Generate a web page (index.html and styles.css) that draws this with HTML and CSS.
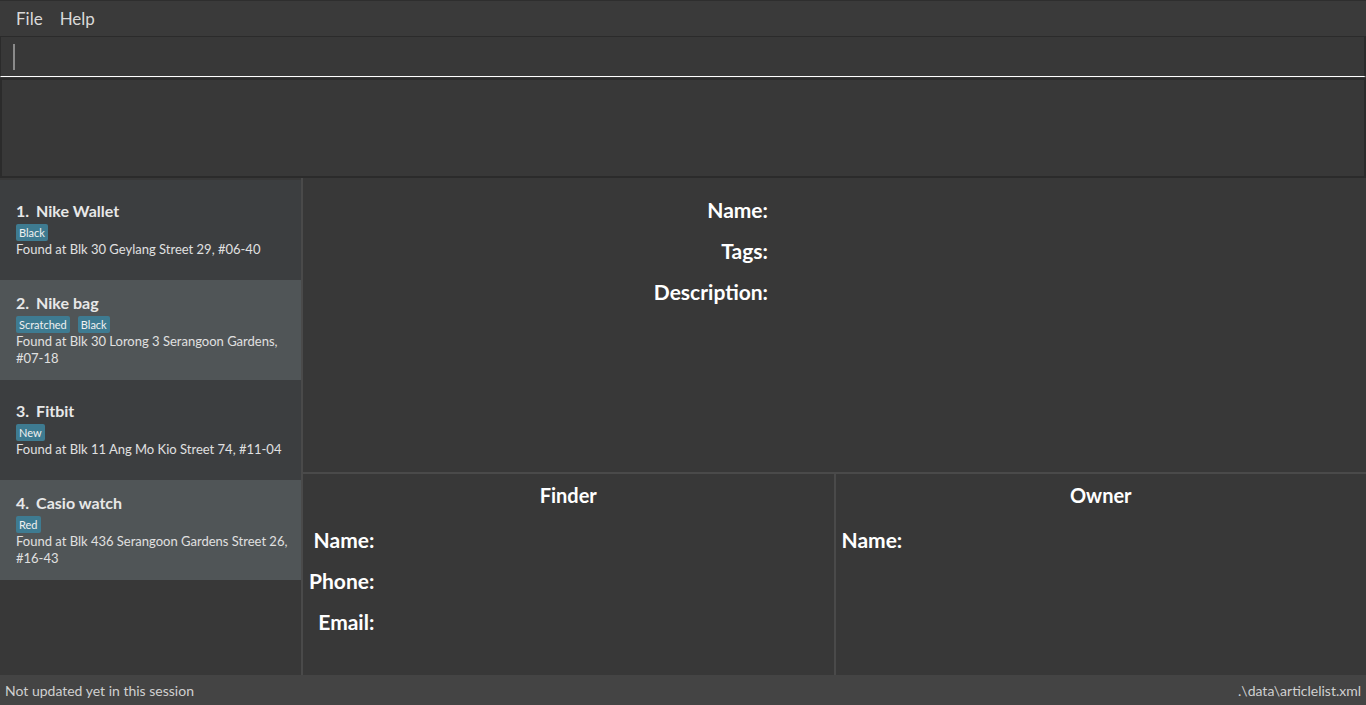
FILE: index.html
```html
<!DOCTYPE html>
<html>
<head>
<meta charset="utf-8">
<link rel="stylesheet" href="styles.css">
</head>
<body>
<div class="app">
  <div class="menubar">
    <span class="menu-item">File</span>
    <span class="menu-item">Help</span>
  </div>
  <div class="command"><span class="caret"></span></div>
  <div class="result"></div>
  <div class="main">
    <div class="list">
      <div class="card dark">
        <div class="title"><span class="idx">1.</span>Nike Wallet</div>
        <div class="tags"><span class="tag">Black</span></div>
        <div class="addr">Found at Blk 30 Geylang Street 29, #06-40</div>
      </div>
      <div class="card light">
        <div class="title"><span class="idx">2.</span>Nike bag</div>
        <div class="tags"><span class="tag">Scratched</span><span class="tag">Black</span></div>
        <div class="addr">Found at Blk 30 Lorong 3 Serangoon Gardens, #07-18</div>
      </div>
      <div class="card dark">
        <div class="title"><span class="idx">3.</span>Fitbit</div>
        <div class="tags"><span class="tag">New</span></div>
        <div class="addr">Found at Blk 11 Ang Mo Kio Street 74, #11-04</div>
      </div>
      <div class="card light">
        <div class="title"><span class="idx">4.</span>Casio watch</div>
        <div class="tags"><span class="tag">Red</span></div>
        <div class="addr">Found at Blk 436 Serangoon Gardens Street 26, #16-43</div>
      </div>
    </div>
    <div class="detail">
      <div class="article">
        <div class="lbl">Name:</div><div></div>
        <div class="lbl">Tags:</div><div></div>
        <div class="lbl">Description:</div><div></div>
      </div>
      <div class="people">
        <div class="person finder">
          <div class="ptitle">Finder</div>
          <div class="pgrid">
            <div class="lbl">Name:</div><div></div>
            <div class="lbl">Phone:</div><div></div>
            <div class="lbl">Email:</div><div></div>
          </div>
        </div>
        <div class="person owner">
          <div class="ptitle">Owner</div>
          <div class="pgrid">
            <div class="lbl">Name:</div><div></div>
          </div>
        </div>
      </div>
    </div>
  </div>
  <div class="status">
    <span>Not updated yet in this session</span>
    <span>.\data\articlelist.xml</span>
  </div>
</div>
</body>
</html>
```
FILE: styles.css
```css
* { box-sizing: border-box; }
html, body { margin: 0; padding: 0; }
body {
  background: #383838;
  font-family: "Lato", "Open Sans", sans-serif;
  color: #e6e6e6;
  width: 1366px;
  height: 705px;
  overflow: hidden;
}
.app {
  display: flex;
  flex-direction: column;
  height: 705px;
}
.menubar {
  height: 37px;
  background: #3a3a3a;
  border-top: 1px solid #2e2e2e;
  border-bottom: 1px solid #2b2b2b;
  display: flex;
  align-items: center;
  gap: 17px;
  padding-left: 16px;
  font-size: 17px;
  color: #d9d9d9;
}
.command {
  height: 40px;
  background: #383838;
  border-left: 1px solid #2b2b2b;
  border-right: 2px solid #2b2b2b;
  border-bottom: 1px solid #ffffff;
  display: flex;
  align-items: center;
  padding-left: 12px;
}
.caret {
  width: 2px;
  height: 26px;
  background: #8a8a8a;
}
.result {
  height: 100px;
  margin-top: 1px;
  background: #383838;
  border: 2px solid #2b2b2b;
}
.main {
  flex: 1;
  display: flex;
  min-height: 0;
}
.list {
  width: 303px;
  border-right: 2px solid #4a4a4a;
  padding-top: 2px;
  background: #383838;
}
.card {
  height: 100px;
  display: flex;
  flex-direction: column;
  justify-content: center;
  padding: 0 6px 0 16px;
}
.card.dark { background: #3c3e40; }
.card.light { background: #505557; }
.title {
  font-size: 16px;
  font-weight: bold;
  color: #e8e8e8;
  line-height: 18px;
}
.idx { margin-right: 7px; }
.tags {
  display: flex;
  gap: 8px;
  margin-top: 4px;
}
.tag {
  background: #3e7b91;
  color: #f0f0f0;
  font-size: 11px;
  line-height: 17px;
  padding: 0 3px;
  border-radius: 2px;
}
.addr {
  font-size: 13px;
  line-height: 17px;
  color: #e0e0e0;
}
.detail {
  flex: 1;
  display: flex;
  flex-direction: column;
}
.article {
  height: 296px;
  border-bottom: 2px solid #4a4a4a;
  display: grid;
  grid-template-columns: 465px 1fr;
  grid-auto-rows: 41px;
  align-content: start;
  padding-top: 11px;
}
.lbl {
  font-size: 21px;
  font-weight: bold;
  color: #ffffff;
  line-height: 41px;
  text-align: right;
}
.people {
  flex: 1;
  display: flex;
}
.person {
  flex: 1;
  display: flex;
  flex-direction: column;
}
.finder { border-right: 2px solid #4a4a4a; }
.ptitle {
  font-size: 20px;
  font-weight: bold;
  color: #ffffff;
  text-align: center;
  line-height: 30px;
  padding-top: 6px;
}
.pgrid {
  display: grid;
  grid-template-columns: max-content 1fr;
  grid-auto-rows: 41px;
  margin-top: 9px;
  padding-left: 6px;
}
.status {
  height: 30px;
  background: #444444;
  display: flex;
  justify-content: space-between;
  align-items: center;
  padding: 0 5px;
  font-size: 14px;
  color: #d0d0d0;
}
```
